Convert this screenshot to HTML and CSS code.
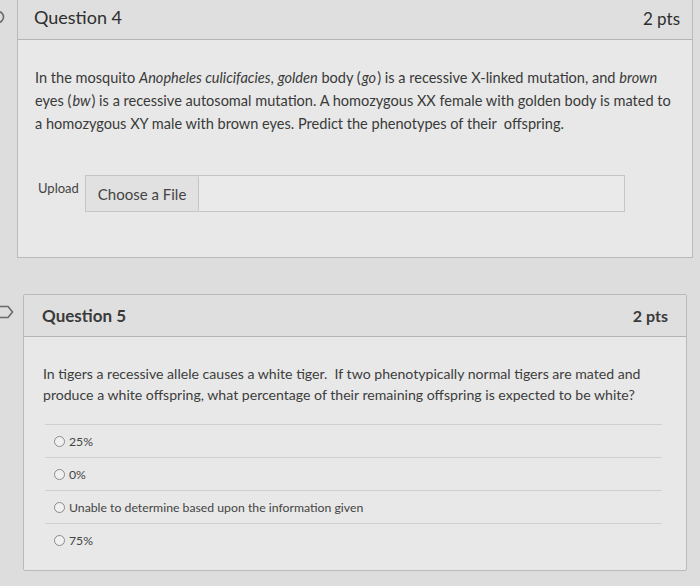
FILE: index.html
```html
<!DOCTYPE html>
<html lang="en">
<head>
<meta charset="utf-8">
<title>Quiz</title>
<link rel="stylesheet" href="styles.css">
</head>
<body>
<div class="quiz">
  <div class="question q4">
    <div class="marker">
      <svg width="16" height="16" viewBox="0 0 16 16"><path d="M1.5 2.5 H8 A5.5 5.5 0 0 1 8 13.5 H1.5 Z" fill="none" stroke="#6a6a6a" stroke-width="1.6" stroke-linejoin="round"/></svg>
    </div>
    <div class="card">
      <div class="card-header">
        <span class="q-title">Question 4</span>
        <span class="q-pts">2 pts</span>
      </div>
      <div class="card-body">
        <p class="q-text"><span class="ln">In the mosquito <em>Anopheles culicifacies</em>, <em>golden</em> body (<em class="gap">go</em>) is a recessive X-linked mutation, and <em>brown</em> </span><span class="ln">eyes (<em class="gap">bw</em>) is a recessive autosomal mutation. A homozygous XX female with golden body is mated to </span><span class="ln">a homozygous XY male with brown eyes. Predict the phenotypes of their&nbsp; offspring.</span></p>
        <div class="upload">
          <span class="upload-label">Upload</span>
          <div class="file-box">
            <span class="file-btn">Choose a File</span>
          </div>
        </div>
      </div>
    </div>
  </div>

  <div class="question q5">
    <div class="marker">
      <svg width="20" height="16" viewBox="0 0 20 16"><path d="M1 2.5 H13 L17.5 8 L13 13.5 H1 Z" fill="none" stroke="#6a6a6a" stroke-width="1.6" stroke-linejoin="round"/></svg>
    </div>
    <div class="card">
      <div class="card-header">
        <span class="q-title bold">Question 5</span>
        <span class="q-pts bold">2 pts</span>
      </div>
      <div class="card-body">
        <p class="q-text small">In tigers a recessive allele causes a white tiger.&nbsp; If two phenotypically normal tigers are mated and produce a white offspring, what percentage of their remaining offspring is expected to be white?</p>
        <ul class="answers">
          <li class="answer"><span class="radio"></span>25%</li>
          <li class="answer"><span class="radio"></span>0%</li>
          <li class="answer"><span class="radio"></span>Unable to determine based upon the information given</li>
          <li class="answer"><span class="radio"></span>75%</li>
        </ul>
      </div>
    </div>
  </div>
</div>
</body>
</html>
```
FILE: styles.css
```css
html, body {
  margin: 0;
  padding: 0;
}
body {
  background: #dcdddc;
  font-family: Lato, "Open Sans", "Liberation Sans", sans-serif;
  color: #3b3b3b;
  width: 700px;
  height: 586px;
  overflow: hidden;
}
.quiz {
  display: flex;
  flex-direction: column;
  gap: 36px;
}
.question {
  display: flex;
  align-items: flex-start;
}
.marker {
  display: flex;
  flex-shrink: 0;
}
.q4 .marker {
  width: 17px;
  padding-top: 9px;
}
.q4 .marker svg {
  margin-left: -10px;
}
.q5 .marker {
  width: 23px;
  padding-top: 10px;
}
.q5 .marker svg {
  margin-left: -5px;
}
.card {
  flex: 1;
  border: 1px solid #b9bab9;
  background: #e7e8e7;
}
.q4 .card {
  margin-right: 7px;
  border-top: none;
}
.q5 .card {
  margin-right: 13px;
  border-radius: 2px;
}
.card-header {
  display: flex;
  justify-content: space-between;
  align-items: center;
  background: #dedfde;
  border-bottom: 1px solid #b3b4b3;
}
.q4 .card-header {
  height: 39px;
  padding: 0 12px 0 16px;
}
.q5 .card-header {
  height: 41px;
  padding: 0 18px 0 18px;
}
.q-title {
  font-size: 18px;
  color: #2f2f2f;
}
.q-pts {
  font-size: 17px;
  color: #2f2f2f;
}
.q4 .q-title { margin-top: -6px; }
.q4 .q-pts { margin-top: -2px; }
.bold {
  font-weight: 700;
  color: #3a3a3a;
}
.q5 .q-title { font-size: 17px; }
.q5 .q-pts { font-size: 16px; }
.card-body {
  display: flex;
  flex-direction: column;
}
.q4 .card-body {
  padding: 26px 14px 45px 17px;
}
.q5 .card-body {
  padding: 26px 24px 14px 19px;
}
.q-text {
  margin: 0;
  font-size: 14.55px;
  line-height: 23px;
  color: #3a3a3a;
}
.q-text em.gap {
  padding: 0 1px;
}
.q-text.small {
  font-size: 14.1px;
  line-height: 21px;
  color: #3d3d3d;
}
.upload {
  display: flex;
  align-items: flex-start;
  gap: 6px;
  margin-top: 40px;
  padding-left: 3px;
}
.upload-label {
  font-size: 13px;
  color: #444;
  padding-top: 5px;
}
.file-box {
  display: flex;
  width: 538px;
  height: 35px;
  border: 1px solid #c4c5c4;
  background: #e9eae9;
}
.file-btn {
  display: flex;
  align-items: center;
  padding: 0 12px;
  font-size: 15px;
  color: #444;
  background: #e0e1e0;
  border-right: 1px solid #c4c5c4;
  border-radius: 2px;
}
.answers {
  list-style: none;
  margin: 19px 0 0 0;
  padding: 0 0 0 2px;
}
.answer {
  display: flex;
  align-items: center;
  height: 33px;
  border-top: 1px solid #cfd0cf;
  font-size: 12.25px;
  color: #444;
  padding-left: 9px;
  box-sizing: border-box;
}
.radio {
  width: 9px;
  height: 9px;
  border: 1px solid #8a8b8a;
  border-radius: 50%;
  background: #f0f0f0;
  margin-right: 4px;
  flex-shrink: 0;
}
```
